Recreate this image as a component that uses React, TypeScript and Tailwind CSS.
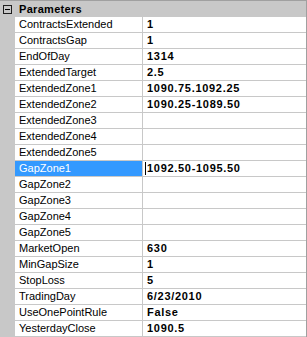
const rows: [string, string][] = [
  ['ContractsExtended', '1'],
  ['ContractsGap', '1'],
  ['EndOfDay', '1314'],
  ['ExtendedTarget', '2.5'],
  ['ExtendedZone1', '1090.75.1092.25'],
  ['ExtendedZone2', '1090.25-1089.50'],
  ['ExtendedZone3', ''],
  ['ExtendedZone4', ''],
  ['ExtendedZone5', ''],
  ['GapZone1', '1092.50-1095.50'],
  ['GapZone2', ''],
  ['GapZone3', ''],
  ['GapZone4', ''],
  ['GapZone5', ''],
  ['MarketOpen', '630'],
  ['MinGapSize', '1'],
  ['StopLoss', '5'],
  ['TradingDay', '6/23/2010'],
  ['UseOnePointRule', 'False'],
  ['YesterdayClose', '1090.5'],
];

const App = () => {
  const selected = 'GapZone1';

  return (
    <div
      className="w-[307px] h-[337px] bg-white border-t border-r border-[#a0a0a0] overflow-hidden text-[11px] leading-none text-black"
      style={{ fontFamily: '"Liberation Sans", Arial, sans-serif' }}
    >
      {/* category header */}
      <div className="flex items-center h-[16px] bg-[#c8c8c8]">
        <div className="w-[15px] flex items-center justify-center shrink-0">
          <div className="w-[9px] h-[9px] border border-[#1e1e1e] flex items-center justify-center">
            <div className="w-[5px] h-px bg-black" />
          </div>
        </div>
        <span className="pl-[4px] font-bold tracking-[0.3px]">Parameters</span>
      </div>

      {rows.map(([name, value]) => {
        const isSel = name === selected;
        return (
          <div key={name} className="flex h-[16px]">
            <div className="w-[15px] shrink-0 bg-[#c8c8c8]" />
            <div
              className={
                'w-[128px] shrink-0 flex items-center pl-[4px] border-b border-r border-[#c8c8c8] ' +
                (isSel ? 'bg-[#3399ff] text-white' : 'bg-white')
              }
            >
              {name}
            </div>
            <div className="flex-1 flex items-center pl-[4px] border-b border-[#c8c8c8] font-bold tracking-[0.7px]">
              {isSel ? (
                <>
                  <span className="w-px h-[13px] bg-black -ml-[2px] mr-[1px]" />
                  {value}
                </>
              ) : (
                value
              )}
            </div>
          </div>
        );
      })}
    </div>
  );
};

export default App;
